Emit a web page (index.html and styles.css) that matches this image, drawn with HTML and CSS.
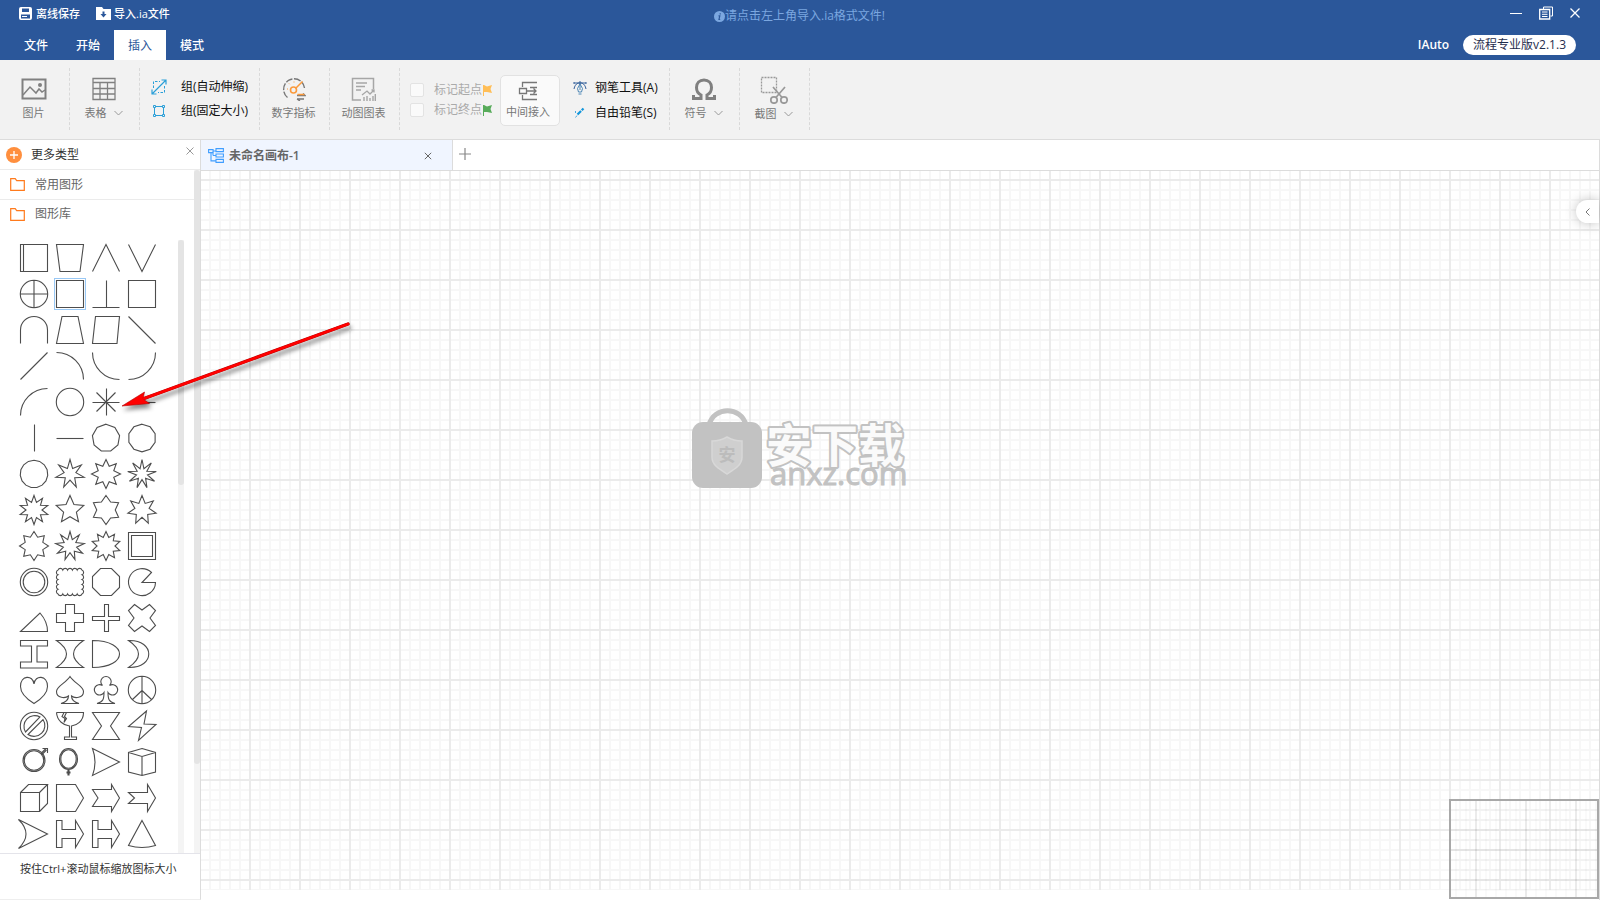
FILE: index.html
```html
<!DOCTYPE html>
<html lang="zh-CN">
<head>
<meta charset="utf-8">
<title>IAuto</title>
<link rel="stylesheet" href="styles.css">
</head>
<body>
<header class="header">
  <div class="titlebar">
    <div class="quick">
      <button class="quick-btn"><svg width="13" height="13" viewBox="0 0 13 13"><path fill="#fff" fill-rule="evenodd" d="M2 0h9a2 2 0 0 1 2 2v9a2 2 0 0 1-2 2H2a2 2 0 0 1-2-2V2a2 2 0 0 1 2-2zM3 1.500V5h7V1.500zM2 7.500v4h9v-4zM3 9h5v1H3z"/></svg>离线保存</button>
      <button class="quick-btn quick-import"><svg width="15" height="13" viewBox="0 0 15 13"><path fill="#fff" fill-rule="evenodd" d="M0 0h6l1.500 2H15v11H0zM6.500 4.500V7H4.500l3 3.500 3-3.500h-2V4.500z"/></svg>导入.ia文件</button>
    </div>
    <p class="notice"><svg width="11" height="11" viewBox="0 0 11 11"><circle cx="5.500" cy="5.500" r="5.500" fill="#7ba7e0"/><path d="M6.200 2.200v1.300M4.500 4.900h1.300L5 8.500h1.200" stroke="#2b579a" stroke-width="1.200" fill="none"/></svg>请点击左上角导入.ia格式文件!</p>
    <div class="window-buttons">
      <button aria-label="最小化"><svg width="12" height="14" viewBox="0 0 12 14"><path d="M0 7.500h12" stroke="#fff"/></svg></button>
      <button aria-label="还原"><svg width="14" height="14" viewBox="0 0 14 14" fill="none" stroke="#fff"><path d="M4.500 3V1h9v9h-2"/><path d="M.7 3.500h10v9.500H.7z" stroke-width="1.300"/><path d="M3 6h5.500M3 8.300h5.500M3 10.500h5.500"/></svg></button>
      <button aria-label="关闭"><svg width="10" height="14" viewBox="0 0 10 14"><path d="M.5 2.500l9 9m0-9l-9 9" stroke="#fff" stroke-width="1.300"/></svg></button>
    </div>
  </div>
  <div class="menubar">
    <nav class="menu">
      <button class="menu-item">文件</button>
      <button class="menu-item">开始</button>
      <button class="menu-item active">插入</button>
      <button class="menu-item">模式</button>
    </nav>
    <div class="account"><span class="brand">IAuto</span><span class="edition">流程专业版v2.1.3</span></div>
  </div>
</header>

<div class="ribbon">
  <div class="group">
    <button class="tool"><svg width="26" height="24" viewBox="0 0 26 24" fill="none" stroke="#808080"><rect x="1.500" y="2.500" width="23" height="19" stroke-width="2"/><path d="M2 18l7-8 6 6 3-4 3 3 3-2" stroke-width="1.500"/><circle cx="19" cy="8" r="2" fill="#808080" stroke="none"/></svg><span>图片</span></button>
  </div>
  <div class="group">
    <button class="tool"><svg width="24" height="24" viewBox="0 0 24 24" fill="none" stroke="#808080"><path d="M1 1.500h22v21H1zM1 5.500h22M1 11.500h22M1 17h22M8 6v16M15.500 6v16" stroke-width="1.300"/></svg><span class="with-arrow">表格<svg width="9" height="6" viewBox="0 0 9 6"><path class="chev" d="M.5 1l4 4 4-4"/></svg></span></button>
  </div>
  <div class="group wide">
    <button class="line-tool"><svg width="16" height="16" viewBox="0 0 16 16" fill="none" stroke="#2a9fd8"><path d="M2.500 9V2.500H9M13.500 7v6.500H7" stroke-dasharray="2.500 1.500"/><path d="M1 15L15 1M10.500 1H15v4.500M5.500 15H1v-4.500" stroke-width="1.200"/></svg>组(自动伸缩)</button>
    <button class="line-tool"><svg width="16" height="16" viewBox="0 0 16 16" fill="none" stroke="#2a9fd8"><path d="M3.500 5v6M12.500 5v6M5 3.500h6M5 12.500h6"/><path d="M2.500 2.500h2v2h-2zM11.500 2.500h2v2h-2zM2.500 11.500h2v2h-2zM11.500 11.500h2v2h-2z"/></svg>组(固定大小)</button>
  </div>
  <div class="group">
    <button class="tool"><svg width="24" height="24" viewBox="0 0 24 24" fill="none"><path d="M5.500 20.500A10.500 10.500 0 1 1 22.500 11" stroke="#777" stroke-width="1.400" stroke-dasharray="7 1.500"/><path d="M15 22h7m-7 0l3 2M15 18.500h8l-2-2" stroke="#777" stroke-width="1.300"/><path d="M13.500 11.500l7-7M15.500 17.500h7" stroke="#fb9a3c" stroke-width="1.500"/><circle cx="11.500" cy="13" r="3" stroke="#fb9a3c" stroke-width="1.600"/><path d="M5 12h1M7 6.500l.7.700M12 4.500v1" stroke="#fb9a3c"/></svg><span>数字指标</span></button>
  </div>
  <div class="group">
    <button class="tool"><svg width="25" height="24" viewBox="0 0 25 24" fill="none" stroke="#a6a6a6"><path d="M10 23H1.500V1.500h21V12" stroke-width="1.500"/><path d="M5 6h11M5 9.500h9M5 13h5" stroke-width="1.500"/><path d="M11 18l5-4 3 3 4-4M20.500 13H23v2.500" stroke-width="1.300"/><path d="M13 24v-4M16 24v-5M19 24v-3M22 24v-5M24.300 24v-7" stroke-width="1.400"/></svg><span>动图图表</span></button>
  </div>
  <div class="group marks">
    <div class="checks">
      <label class="check"><input type="checkbox"><span>标记起点</span><svg width="9" height="11" viewBox="0 0 9 11"><path d="M0 0h1l3 1.500L9 0 7.500 4 9 8 4 7 1 7v4H0z" fill="#ffbe57"/></svg></label>
      <label class="check"><input type="checkbox"><span>标记终点</span><svg width="9" height="11" viewBox="0 0 9 11"><path d="M0 0h1l3 1.500L9 0 7.500 4 9 8 4 7 1 7v4H0z" fill="#57ab5a"/></svg></label>
    </div>
    <button class="tool boxed"><svg width="20" height="20" viewBox="0 0 20 20" fill="none" stroke="#777" stroke-width="1.300"><path d="M19 1.500H4.500V6M19 18.500H4.500V14M1.500 7.500h7v5h-7zM19 6.500h-7M19 13.500h-7M9 10h9m-2.500-2.500L18 10l-2.500 2.500"/></svg><span>中间接入</span></button>
    <div class="pens">
      <button class="line-tool"><svg width="14" height="14" viewBox="0 0 14 14" fill="none" stroke="#2c6f9f"><path d="M1 2h12M1 1v2M13 1v2M6 1h2v2H6zM5 2C3 3 1.500 5 1 8M9 2c2 1 3.500 3 4 6" stroke="#35609b"/><path d="M7 3L4.500 7.500 5.500 11h3l1-3.500zM7 4v5M5.500 13h3" stroke="#4c86b5"/></svg>钢笔工具(A)</button>
      <button class="line-tool"><svg width="14" height="14" viewBox="0 0 14 14" fill="none"><path d="M4.500 8.500L10.500 2.500" stroke="#1296db" stroke-width="2.200" stroke-dasharray="5 1"/><path d="M2.500 5v2M2.500 11.500l1.500-2" stroke="#4aa9df"/></svg>自由铅笔(S)</button>
    </div>
  </div>
  <div class="group">
    <button class="tool"><svg width="24" height="24" viewBox="0 0 24 24"><path fill="none" stroke="#808080" stroke-width="3" d="M1.500 18v3.500H9V18C6 16.500 4.500 14 4.500 10.500 4.500 6 7.500 3 12 3s7.500 3 7.500 7.500c0 3.500-1.500 6-4.500 7.500v3.500h7.500V18"/></svg><span class="with-arrow">符号<svg width="9" height="6" viewBox="0 0 9 6"><path class="chev" d="M.5 1l4 4 4-4"/></svg></span></button>
  </div>
  <div class="group">
    <button class="tool tight"><svg width="28" height="28" viewBox="0 0 28 28" fill="none" stroke="#999"><path d="M1.500 1.500h15v15h-15z" stroke-dasharray="2 1" stroke-width="1.300"/><path d="M13 11l9.500 11M25 11l-9.500 11" stroke-width="1.700"/><circle cx="14" cy="24" r="3.200" stroke-width="1.700"/><circle cx="24" cy="24" r="3.200" stroke-width="1.700"/></svg><span class="with-arrow">截图<svg width="9" height="6" viewBox="0 0 9 6"><path class="chev" d="M.5 1l4 4 4-4"/></svg></span></button>
  </div>
</div>

<main class="workspace">
  <aside class="sidebar">
    <div class="side-head">
      <svg width="16" height="16" viewBox="0 0 16 16"><circle cx="8" cy="8" r="8" fill="#ff8f3e"/><path d="M8 4v8M4 8h8" stroke="#fff" stroke-width="1.300"/></svg>
      <span>更多类型</span>
      <button class="side-close" aria-label="关闭"><svg width="8" height="8" viewBox="0 0 8 8"><path d="M.5.500l7 7m0-7l-7 7" stroke="#999"/></svg></button>
    </div>
    <div class="side-scroll">
      <div class="side-content">
        <button class="folder first"><svg width="15" height="13" viewBox="0 0 15 13"><path d="M.7 12.300V.7h4.500l1.500 2h7.600v9.600z" fill="none" stroke="#ff7a1c" stroke-width="1.200"/></svg>常用图形</button>
        <button class="folder"><svg width="15" height="13" viewBox="0 0 15 13"><path d="M.7 12.300V.7h4.500l1.500 2h7.600v9.600z" fill="none" stroke="#ff7a1c" stroke-width="1.200"/></svg>图形库</button>
        <div class="library">
          <div class="shapes" id="shapes"></div>
          <div class="track inner"><div class="thumb"></div></div>
        </div>
      </div>
      <div class="track outer"><div class="thumb"></div></div>
    </div>
    <div class="side-foot">按住Ctrl+滚动鼠标缩放图标大小</div>
  </aside>

  <section class="editor">
    <div class="tabs">
      <div class="tab">
        <svg width="16" height="15" viewBox="0 0 16 15" fill="none" stroke="#409eff" stroke-width="1.100"><path d="M.6 1.600h4.500v3H.6zM8 .6h7.400v3H8zM8 6h7.400v3H8zM8 11.400h7.400v3H8zM5 3h3M3 4.600v8.300h5M5 7.500h3M5 3v4.500"/></svg>
        <span class="tab-title">未命名画布-1</span>
        <button class="tab-close" aria-label="关闭"><svg width="8" height="8" viewBox="0 0 8 8"><path d="M.8.800l6.400 6.400m0-6.400L.8 7.200" stroke="#666"/></svg></button>
      </div>
      <button class="tab-add" aria-label="新建"><svg width="12" height="12" viewBox="0 0 12 12"><path d="M6 0v12M0 6h12" stroke="#888" stroke-width="1.200"/></svg></button>
    </div>
    <div class="canvas">
      <div class="grid"></div>
      <svg class="watermark" width="220" height="100" viewBox="0 0 220 100">
        <path d="M19 20C24 1 51 1 56 20" fill="none" stroke="#c2c2c2" stroke-width="5"/>
        <rect x="2" y="17" width="70" height="66" rx="11" fill="#c2c2c2"/>
        <path d="M22 36c5 0 10-1 15-4 5 3 10 4 15 4v16c0 8-7 12-15 17-8-5-15-9-15-17z" fill="#cfcfcf" stroke="#d8d8d8" stroke-width="1.500"/>
        <text class="wm-seal" x="37" y="56" text-anchor="middle">安</text>
        <text class="wm-name" x="76" y="57">安下载</text>
        <text class="wm-site" x="80" y="80">anxz.com</text>
      </svg>
      <button class="drawer" aria-label="展开"><svg width="5" height="8" viewBox="0 0 5 8"><path d="M4.500.5L1 4l3.500 3.500" fill="none" stroke="#777"/></svg></button>
      <div class="minimap"></div>
    </div>
  </section>

  <svg class="pointer" width="240" height="100" viewBox="0 0 240 100">
    <path d="M233 11L29 85.500" stroke="#b00000" stroke-width="3.400" stroke-linecap="round"/>
    <path d="M7 93L29.500 79l-1.500 7 6.500 4.500z" fill="#f00" stroke="#b00000" stroke-width=".6"/>
    <path d="M233 11L29 85.500" stroke="#f00" stroke-width="2.600" stroke-linecap="round"/>
  </svg>
</main>
<script src="shapes.js"></script>
</body>
</html>
```
FILE: shapes.js
```js
// Outline library: every shape is drawn in a 28 x 28 box.
const polar = (r, a) => `${(14 + r * Math.sin(a)).toFixed(2)} ${(14 - r * Math.cos(a)).toFixed(2)}`;
const polygon = (n, r = 13.8, turn = 0) =>
  'M' + Array.from({ length: n }, (_, i) => polar(r, turn + i * 2 * Math.PI / n)).join('L') + 'z';
const star = (n, inner) =>
  'M' + Array.from({ length: 2 * n }, (_, i) => polar(i % 2 ? 14 * inner : 14.5, i * Math.PI / n)).join('L') + 'z';
const circle = (r, x = 14, y = 14) => `M${x - r} ${y}a${r} ${r} 0 1 0 ${2 * r} 0a${r} ${r} 0 1 0 ${-2 * r} 0z`;
const box = 'M.5.5h27v27H.5z';

const shapes = [
  box + 'M3.500.5v27', 'M.5.5h27L24 27.500H4z', 'M.5 27.500L14 .5l13.500 27', 'M.5.5L14 27.500 27.500.5',
  circle(13.7) + 'M.5 14h27M14 .5v27', box, 'M14.500.5v27M.5 27.500h27', box,
  'M.5 27.500V14a13.500 13.500 0 0 1 27 0v13.500', 'M6 .5h16l5.500 27H.5z', 'M3.500.5h24L25 27.500H.5z', 'M.5.5l27 27',
  'M.5 27.500l27-27', 'M.5.5a27 27 0 0 1 27 27', 'M.5.5a27 27 0 0 0 27 27', 'M27.500.5a27 27 0 0 1-27 27',
  'M.5 27.500a27 27 0 0 1 27-27', circle(13.7), 'M14.500.5v27M.5 14.500h27M4.500 4.500l19 19M23.500 4.500l-19 19', 'M.5 14.500h27',
  'M14.500.5v27', 'M.5 14.500h27', polygon(9), polygon(10),
  polygon(15), star(7, .43), star(8, .6), star(9, .4),
  star(10, .57), star(5, .48), star(6, .66), star(7, .52),
  star(8, .68), star(9, .48), star(10, .64), box + 'M3.500 3.500h21v21h-21z',
  circle(13.7) + circle(10.8),
  'M2 2' + 'a2.600 2.600 0 0 1 4.800 0'.repeat(5) + 'a2.600 2.600 0 0 1 0 4.800'.repeat(5) + 'a2.600 2.600 0 0 1-4.800 0'.repeat(5) + 'a2.600 2.600 0 0 1 0-4.800'.repeat(5) + 'z',
  'M8.500.5h11l8 8v11l-8 8h-11l-8-8v-11z', 'M27.500 14.500A13.500 13.500 0 1 1 23.500 4.500L14 14.500z',
  'M.5 27.500h27q0-10-7.500-18.500z', 'M9.500.5h9v9h9v9h-9v9h-9v-9h-9v-9h9z', 'M12.500.5h4v12h11v4h-11v11h-4v-11H.5v-4h12z', 'M6.500.5l7.500 5.500 7.500-5.500 6 6L22 14l5.500 7.500-6 6L14 22l-7.500 5.500-6-6L6 14 .5 6.500z',
  'M.5.5h27v5.500H17v16h10.500v6H.5v-6h11v-16H.5z', 'M.5.5h27q-20 13.500 0 27H.5q20-13.500 0-27z', 'M.5.5c36 0 36 27 0 27z', 'M.5.5c27-1 27 28 0 27q20-13.500 0-27z',
  'M14 8C13-1.500 .5-1 .5 10.500c0 8 7 13 13.500 17 6.500-4 13.500-9 13.500-17C27.500-1 15-1.500 14 8z',
  'M14 .5C10 7 .5 10 .5 15.500c0 7 9 7 12 4.500 0 4-2 6-7.500 7.500h18c-5.500-1.500-7.500-3.500-7.500-7.500 3 2.500 12 2.500 12-4.500C27.500 10 18 7 14 .5z',
  'M10.500 9.500A5.200 5.200 0 1 1 17.500 9.500A5.200 5.200 0 1 1 16 16.500c0 7 1 9.500 7 11H5c6-1.500 7-4 7-11A5.200 5.200 0 1 1 10.500 9.500z',
  circle(13.7) + 'M14 .5v27M14 14.500l-9.500 9M14 14.500l9.500 9',
  circle(13.7) + 'M5.500 20a10.800 10.800 0 0 1 14.500-15zM8 22.500a10.800 10.800 0 0 0 15-15z',
  'M.5.5h27c0 9-7 13-12 13.500V25h5v2.500h-12V25h5V14C8 13.500 1 9 .5.5M8 .5l-2 4 3 2-1 4M10.500.5l-2 4 2 2-2.500 4',
  'M.5.5h27L18.500 14l9 13.500H.5l9-13.500z', 'M18.500-1L.5 14.500l13 1L10.500 28.500l17.500-16-12-.5z',
  circle(11, 14, 12.5) + circle(9.7, 14, 12.5) + 'M21 5.500l5-5M22 6.500l4.500-4.500M22.500.5h5V5',
  'M3.500 11a9 10.500 0 1 1 18 0 9 10.500 0 1 1-18 0zM4.800 11a7.700 9.300 0 1 1 15.400 0 7.700 9.300 0 1 1-15.400 0zM12 21.500V27.500M13 21.500V27.500M10.500 24h4M10.500 25h4',
  'M.5.5l27 13.500-27 13.500q5-13.500 0-27z', 'M14 .5l13.500 4v19.500L14 27.500.5 24V4.500zM.5 4.500L14 8.500l13.500-4M14 8.500v19',
  'M.5 8.500h19v19H.5zM.5 8.500l8-8h19l-8 8M27.500.5v19l-8 8', 'M.5.5h19L27.500 14l-8 13.500H.5z', 'M.5 5.500h19v-5L27.500 14l-8 13.500v-5H.5L6 14z', 'M.5 8.500h19v-8L27.500 14l-8 13.500v-8H.5L6.500 14z',
  'M-1.500-.5L27.500 14l-29 14.500q15-14.500 0-29z', 'M.5.5h5.500v9h13.500v-9L27.500 14l-8 13.500v-9H6v9H.5z', 'M.5.5h5.500v9h13.500v-9L27.500 14l-8 13.500v-9H6v9H.5z', 'M14 .5l13.500 25q-13.500 4-27 0z'
];

document.getElementById('shapes').innerHTML = shapes.map((d, i) =>
  `<button class="shape${i === 5 ? ' selected' : ''}"><svg viewBox="0 0 28 28"><path d="${d}"/></svg></button>`
).join('');
```
FILE: styles.css
```css
* { box-sizing: border-box; }
body {
  margin: 0;
  height: 100vh;
  display: flex;
  flex-direction: column;
  overflow: hidden;
  background: #fff;
  color: #333;
  font: 12px/16px "Open Sans", "Noto Sans CJK SC", sans-serif;
}
button {
  margin: 0;
  padding: 0;
  border: 0;
  background: none;
  color: inherit;
  font: inherit;
  display: flex;
  align-items: center;
}
svg { display: block; flex: none; }

.header { background: #2b579a; color: #fff; }
.titlebar {
  height: 30px;
  display: grid;
  grid-template-columns: 1fr auto 1fr;
  align-items: center;
  padding: 0 20px 0 19px;
}
.quick { display: flex; gap: 16px; font-size: 11px; font-weight: 500; padding-bottom: 3px; }
.quick-btn { gap: 4px; }
.quick-import { gap: 3px; }
.notice { margin: 0; padding-top: 2px; display: flex; align-items: center; color: #7ba7e0; }
.window-buttons { display: flex; justify-content: flex-end; gap: 17px; padding-bottom: 5px; }
.menubar { height: 30px; display: flex; justify-content: space-between; padding: 0 24px 0 10px; }
.menu { display: flex; }
.menu-item { width: 52px; padding-top: 2px; justify-content: center; font-weight: 500; }
.menu-item.active { background: #fff; color: #2b579a; font-weight: 400; }
.account { display: flex; align-items: center; gap: 14px; }
.brand { font-weight: 600; }
.edition { padding: 0 10px; border-radius: 10px; line-height: 20px; background: #fff; color: #1f2d4d; }

.ribbon {
  height: 80px;
  flex: none;
  display: flex;
  background: #f2f2f2;
  border-bottom: 1px solid #dcdcdc;
}
.group {
  width: 70px;
  height: 62px;
  margin-top: 8px;
  display: flex;
  flex-direction: column;
  justify-content: center;
  border-right: 1px dashed #d9d9d9;
}
.group.wide { width: 120px; padding-left: 11px; gap: 8px; }
.group.marks { width: 270px; padding-left: 10px; padding-top: 2px; flex-direction: row; justify-content: flex-start; align-items: center; }
.tool {
  flex-direction: column;
  justify-content: center;
  gap: 4px;
  padding-right: 2px;
  font-size: 11px;
  color: #777;
}
.tool.tight { gap: 2px; }
.with-arrow { display: flex; align-items: center; gap: 7px; }
.chev { fill: none; stroke: #999; }
.line-tool { gap: 14px; color: #111; }
.checks { width: 90px; display: flex; flex-direction: column; gap: 4px; }
.check { display: flex; align-items: center; color: #aaa; }
.check input {
  appearance: none;
  width: 14px;
  height: 14px;
  margin: 0 10px 0 0;
  border: 1px solid #e3e3e3;
  border-radius: 2px;
  background: #fafafa;
}
.check svg { margin-left: 1px; }
.boxed {
  width: 60px;
  height: 51px;
  padding-right: 4px;
  border: 1px solid #e2e2e2;
  border-radius: 5px;
  background: #fafafa;
  gap: 3px;
}
.pens { display: flex; flex-direction: column; gap: 9px; padding-left: 13px; }
.pens .line-tool { gap: 8px; }

.workspace { position: relative; flex: 1; min-height: 0; display: flex; }
.sidebar {
  width: 201px;
  flex: none;
  display: flex;
  flex-direction: column;
  border-right: 1px solid #dcdcdc;
  border-bottom: 1px solid #eee;
}
.side-head {
  height: 30px;
  flex: none;
  display: flex;
  align-items: center;
  gap: 9px;
  padding: 0 6px;
  border-bottom: 1px solid #ebebeb;
}
.side-close { margin-left: auto; padding-bottom: 8px; }
.side-scroll { flex: 1; min-height: 0; display: flex; overflow: hidden; }
.side-content { flex: 1; display: flex; flex-direction: column; }
.folder { height: 30px; flex: none; padding-left: 10px; padding-bottom: 2px; gap: 10px; color: #666; }
.folder.first { padding-bottom: 0; border-bottom: 1px solid #ebebeb; }
.library { flex: 1; min-height: 0; display: flex; justify-content: space-between; padding: 10px 10px 0 16px; }
.shapes { display: grid; grid-template-columns: repeat(4, 36px); grid-auto-rows: 36px; }
.shape { width: 36px; height: 36px; justify-content: center; }
.shape svg { width: 28px; height: 28px; overflow: visible; }
.shape path { fill: none; stroke: #4d4d4d; stroke-width: 1.1; }
.shape.selected svg { outline: 1px solid #99c8f5; outline-offset: 1px; }
.track { width: 6px; background: #f4f4f4; }
.track .thumb { background: #e4e4e4; border-radius: 3px; }
.track.inner .thumb { height: 40%; }
.track.outer .thumb { height: 87%; }
.side-foot {
  height: 46px;
  flex: none;
  padding: 7px 20px;
  border-top: 1px solid #e4e4ea;
  font-size: 11px;
  white-space: nowrap;
}

.editor { flex: 1; min-width: 0; display: flex; flex-direction: column; border-right: 1px solid #dcdcdc; }
.tabs { height: 31px; flex: none; display: flex; border-bottom: 1px solid #dcdcdc; }
.tab {
  width: 252px;
  display: flex;
  align-items: center;
  gap: 5px;
  padding: 1px 20px 0 7px;
  background: #f0f5ff;
  border-right: 1px solid #dcdcdc;
}
.tab-title { font-weight: 600; color: #666; }
.tab-close { margin-left: auto; }
.tab-add { padding: 0 6px 2px; }
.canvas { position: relative; flex: 1; padding-bottom: 10px; display: flex; }
.grid {
  flex: 1;
  background-image:
    linear-gradient(to right, #ebebeb 2px, transparent 2px),
    linear-gradient(#ebebeb 2px, transparent 2px),
    linear-gradient(to right, #f7f7f7 2px, transparent 2px),
    linear-gradient(#f7f7f7 2px, transparent 2px);
  background-size: 50px 50px, 50px 50px, 10px 10px, 10px 10px;
  background-position: 48px 8px, 48px 8px, 8px 8px, 8px 8px;
}
.watermark { position: absolute; left: 35%; top: 234px; }
.wm-seal { font: 700 17px "Noto Sans CJK SC", sans-serif; fill: #bcbcbc; }
.wm-name {
  font: 700 46px "Noto Sans CJK SC", sans-serif;
  fill: #fafafa;
  stroke: #c2c2c2;
  stroke-width: 4px;
  stroke-linejoin: round;
  paint-order: stroke;
}
.wm-site { font: 400 31px "Open Sans", sans-serif; fill: #c2c2c2; stroke: #c2c2c2; stroke-width: 1px; }
.drawer {
  position: absolute;
  right: 0;
  top: 29px;
  width: 23px;
  height: 23px;
  justify-content: center;
  border-radius: 12px 0 0 12px;
  background: #fff;
  box-shadow: 0 0 12px rgba(0, 0, 0, .25);
}
.minimap {
  position: absolute;
  right: 0;
  bottom: 1px;
  width: 150px;
  height: 100px;
  border: 2px solid #a8a8a8;
  background-image:
    linear-gradient(to right, rgba(0, 0, 0, .06) 2px, transparent 2px),
    linear-gradient(rgba(0, 0, 0, .06) 2px, transparent 2px),
    linear-gradient(to right, rgba(0, 0, 0, .02) 2px, transparent 2px),
    linear-gradient(rgba(0, 0, 0, .02) 2px, transparent 2px);
  background-size: 50px 50px, 50px 50px, 10px 10px, 10px 10px;
  background-position: 24px 48px, 24px 48px, 4px 8px, 4px 8px;
}
.pointer {
  position: absolute;
  left: 115px;
  top: 173px;
  pointer-events: none;
  filter: drop-shadow(2px 4px 2px rgba(0, 0, 0, .45));
}
```
